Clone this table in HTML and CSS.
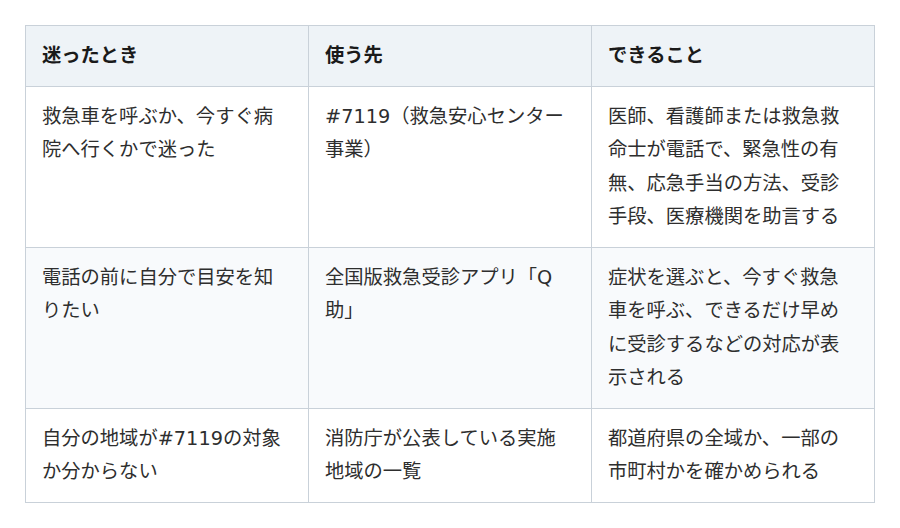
FILE: index.html
```html
<!DOCTYPE html>
<html lang="ja">
<head>
<meta charset="utf-8">
<link rel="stylesheet" href="styles.css">
</head>
<body>
<div class="wrap">
<table class="guide">
  <thead>
    <tr><th>迷ったとき</th><th>使う先</th><th>できること</th></tr>
  </thead>
  <tbody>
    <tr>
      <td>救急車を呼ぶか、今すぐ病院へ行くかで迷った</td>
      <td>#7119（救急安心センター事業）</td>
      <td>医師、看護師または救急救命士が電話で、緊急性の有無、応急手当の方法、受診手段、医療機関を助言する</td>
    </tr>
    <tr class="alt">
      <td>電話の前に自分で目安を知りたい</td>
      <td>全国版救急受診アプリ「Q助」</td>
      <td>症状を選ぶと、今すぐ救急車を呼ぶ、できるだけ早めに受診するなどの対応が表示される</td>
    </tr>
    <tr>
      <td>自分の地域が#7119の対象か分からない</td>
      <td>消防庁が公表している実施地域の一覧</td>
      <td>都道府県の全域か、一部の市町村かを確かめられる</td>
    </tr>
  </tbody>
</table>
</div>
</body>
</html>
```
FILE: styles.css
```css
html, body {
  margin: 0;
  padding: 0;
  background: #ffffff;
}
.wrap {
  padding: 25px 25px 0 25px;
}
.guide {
  width: 850px;
  border-collapse: collapse;
  table-layout: fixed;
  font-family: "DejaVu Sans", "Noto Sans CJK JP", sans-serif;
  font-size: 19.3px;
  line-height: 33.5px;
  color: #2e2e2e;
}
.guide th,
.guide td {
  border: 1px solid #c9d1d9;
  padding: 13px 19px 13px 16px;
  text-align: left;
  vertical-align: top;
  word-break: break-all;
  line-break: strict;
}
.guide th {
  background: #eef3f7;
  font-weight: 700;
  color: #1a1a1a;
}
.guide tr.alt td {
  background: #f8fafc;
}
```
